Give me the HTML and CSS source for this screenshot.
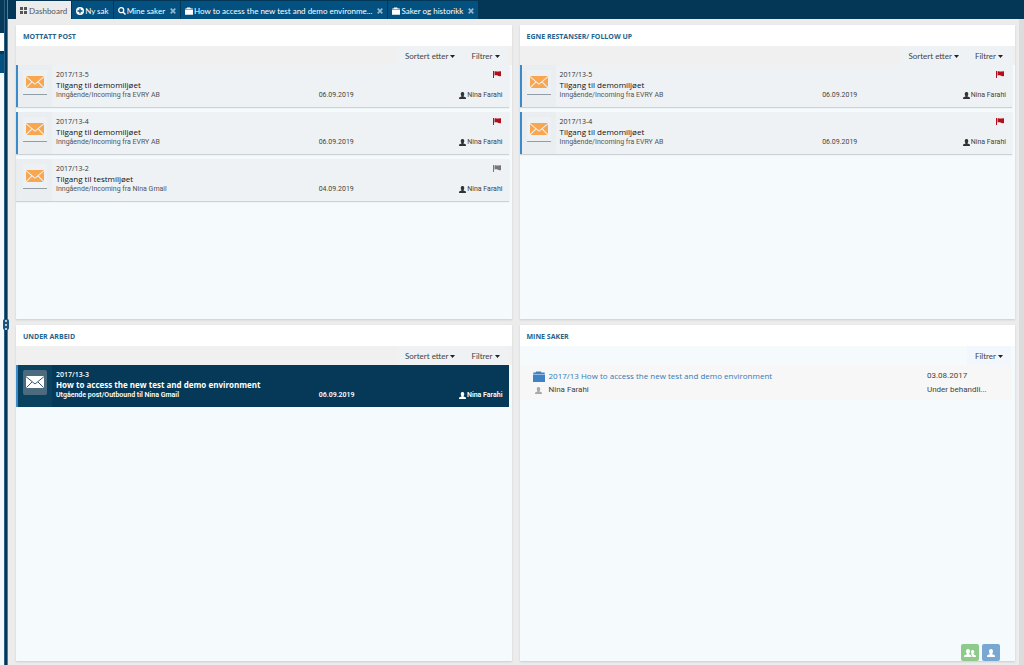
FILE: index.html
```html
<!DOCTYPE html>
<html lang="no">
<head>
<meta charset="utf-8">
<title>Dashboard</title>
<link rel="stylesheet" href="styles.css">
</head>
<body>
<svg class="defs" aria-hidden="true">
  <symbol id="i-mail" viewBox="0 0 18 12"><path d="M0 0H18L9 7.4ZM0 1.3L5.3 5.8L0 11ZM18 1.3L12.7 5.8L18 11ZM6.1 6.4L9 8.7L11.9 6.4L17.3 12H.7Z" fill="currentColor"/></symbol>
  <symbol id="i-mail-line" viewBox="0 0 18 12"><path d="M0 0H18V12H0Z" fill="#fff"/><path d="M0 .6L9 8L18 .6M.4 11.6L6 6M17.6 11.6L12 6" fill="none" stroke="#38596f"/></symbol>
  <symbol id="i-flag" viewBox="0 0 8 7"><path d="M0 0H1V7H0ZM1.500 .4C3-.2 4 .8 5.200 .5L8 .3V5C6.600 5.600 5.500 5 4.500 4.600C3.500 4.200 2.500 4.200 1.500 4.600Z" fill="currentColor"/></symbol>
  <symbol id="i-user" viewBox="0 0 8 8"><path d="M2 2.200C2-.7 6-.7 6 2.200C6 3.700 5.400 4.200 5.200 4.700V5.200L7.500 6Q8 6.300 8 8H0Q0 6.300 .5 6L2.800 5.200V4.700C2.600 4.200 2 3.700 2 2.200Z" fill="currentColor"/></symbol>
  <symbol id="i-users" viewBox="0 0 12 8"><path d="M2 2.200C2-.6 6-.6 6 2.200C6 3.700 5.200 4.200 5.100 4.700V5.200L7 6.200Q7.500 6.500 7.500 8H0Q0 6.500 .5 6.200L2.900 5.200V4.700C2.800 4.200 2 3.700 2 2.200ZM7 2.600C7 .6 10.300 .6 10.300 2.600C10.300 3.900 9.600 4.300 9.500 4.700V5.200L11.500 6.200Q12 6.500 12 8H8.300Q8.300 6 7.400 5.600L6.500 5.100L7.700 4.700C7.300 4.200 7 3.700 7 2.600Z" fill="currentColor"/></symbol>
  <symbol id="i-folder" viewBox="0 0 12 11"><path d="M0 3.600H12V11H0ZM.3 3V1.600H2.500L3.200 .4H7.800L8.500 1.600H11.700V3Z" fill="currentColor"/></symbol>
  <symbol id="i-grid" viewBox="0 0 7 7"><path d="M0 0H3V3H0ZM4 0H7V3H4ZM0 4H3V7H0ZM4 4H7V7H4Z" fill="currentColor"/></symbol>
  <symbol id="i-plus" viewBox="0 0 8 8"><circle cx="4" cy="4" r="4" fill="currentColor"/><path d="M4 1.500V6.500M1.500 4H6.500" stroke="#035180" stroke-width="1.300"/></symbol>
  <symbol id="i-search" viewBox="0 0 8 8"><circle cx="3.200" cy="3.200" r="2.500" fill="none" stroke="currentColor" stroke-width="1.300"/><path d="M5 5L7.500 7.500" stroke="currentColor" stroke-width="1.500"/></symbol>
  <symbol id="i-x" viewBox="0 0 6 6"><path d="M.7 .7L5.300 5.300M5.300 .7L.7 5.300" stroke="currentColor" stroke-width="1.700"/></symbol>
  <symbol id="i-caret" viewBox="0 0 5 3"><path d="M0 0H5L2.500 3Z" fill="currentColor"/></symbol>
</svg>
<div class="app">
  <aside class="rail">
    <div class="rail-top"></div>
    <div class="rail-field"></div>
    <div class="rail-active"></div>
  </aside>
  <div class="splitter"><button class="handle" aria-label="Resize"></button></div>
  <div class="main">
    <nav class="tabs">
      <div class="tab current"><button class="open"><svg class="ic7"><use href="#i-grid"/></svg>Dashboard</button></div>
      <div class="tab"><button class="open"><svg class="ic8"><use href="#i-plus"/></svg>Ny sak</button></div>
      <div class="tab"><button class="open"><svg class="ic8"><use href="#i-search"/></svg>Mine saker</button><button class="close" aria-label="Close"><svg class="ic6"><use href="#i-x"/></svg></button></div>
      <div class="tab"><button class="open"><svg class="ic8"><use href="#i-folder"/></svg>How to access the new test and demo environme...</button><button class="close" aria-label="Close"><svg class="ic6"><use href="#i-x"/></svg></button></div>
      <div class="tab"><button class="open"><svg class="ic8"><use href="#i-folder"/></svg>Saker og historikk</button><button class="close" aria-label="Close"><svg class="ic6"><use href="#i-x"/></svg></button></div>
    </nav>
    <main class="board">
      <section class="panel">
        <h2>MOTTATT POST</h2>
        <div class="tools"><button>Sortert etter<svg class="caret"><use href="#i-caret"/></svg></button><button>Filtrer<svg class="caret"><use href="#i-caret"/></svg></button></div>
        <article class="card unread">
          <div class="thumb"><span><svg class="mail"><use href="#i-mail"/></svg></span></div>
          <div class="info"><span class="num">2017/13-5</span><svg class="flag"><use href="#i-flag"/></svg><h3>Tilgang til demomiljøet</h3><span class="meta">Inngående/Incoming fra EVRY AB</span><time>06.09.2019</time><span class="who"><svg class="ic7"><use href="#i-user"/></svg>Nina Farahi</span></div>
        </article>
        <article class="card unread">
          <div class="thumb"><span><svg class="mail"><use href="#i-mail"/></svg></span></div>
          <div class="info"><span class="num">2017/13-4</span><svg class="flag"><use href="#i-flag"/></svg><h3>Tilgang til demomiljøet</h3><span class="meta">Inngående/Incoming fra EVRY AB</span><time>06.09.2019</time><span class="who"><svg class="ic7"><use href="#i-user"/></svg>Nina Farahi</span></div>
        </article>
        <article class="card">
          <div class="thumb"><span><svg class="mail"><use href="#i-mail"/></svg></span></div>
          <div class="info"><span class="num">2017/13-2</span><svg class="flag muted"><use href="#i-flag"/></svg><h3>Tilgang til testmiljøet</h3><span class="meta">Inngående/Incoming fra Nina Gmail</span><time>04.09.2019</time><span class="who"><svg class="ic7"><use href="#i-user"/></svg>Nina Farahi</span></div>
        </article>
      </section>
      <section class="panel">
        <h2>EGNE RESTANSER/ FOLLOW UP</h2>
        <div class="tools"><button>Sortert etter<svg class="caret"><use href="#i-caret"/></svg></button><button>Filtrer<svg class="caret"><use href="#i-caret"/></svg></button></div>
        <article class="card unread">
          <div class="thumb"><span><svg class="mail"><use href="#i-mail"/></svg></span></div>
          <div class="info"><span class="num">2017/13-5</span><svg class="flag"><use href="#i-flag"/></svg><h3>Tilgang til demomiljøet</h3><span class="meta">Inngående/Incoming fra EVRY AB</span><time>06.09.2019</time><span class="who"><svg class="ic7"><use href="#i-user"/></svg>Nina Farahi</span></div>
        </article>
        <article class="card unread">
          <div class="thumb"><span><svg class="mail"><use href="#i-mail"/></svg></span></div>
          <div class="info"><span class="num">2017/13-4</span><svg class="flag"><use href="#i-flag"/></svg><h3>Tilgang til demomiljøet</h3><span class="meta">Inngående/Incoming fra EVRY AB</span><time>06.09.2019</time><span class="who"><svg class="ic7"><use href="#i-user"/></svg>Nina Farahi</span></div>
        </article>
      </section>
      <section class="panel">
        <h2>UNDER ARBEID</h2>
        <div class="tools"><button>Sortert etter<svg class="caret"><use href="#i-caret"/></svg></button><button>Filtrer<svg class="caret"><use href="#i-caret"/></svg></button></div>
        <article class="card unread selected">
          <div class="thumb"><span><svg class="mail"><use href="#i-mail-line"/></svg></span></div>
          <div class="info"><span class="num">2017/13-3</span><h3>How to access the new test and demo environment</h3><span class="meta">Utgående post/Outbound til Nina Gmail</span><time>06.09.2019</time><span class="who"><svg class="ic7"><use href="#i-user"/></svg>Nina Farahi</span></div>
        </article>
      </section>
      <section class="panel cases">
        <h2>MINE SAKER</h2>
        <div class="tools"><button>Filtrer<svg class="caret"><use href="#i-caret"/></svg></button></div>
        <article class="case">
          <svg class="case-folder"><use href="#i-folder"/></svg><a href="#case">2017/13 How to access the new test and demo environment</a><time>03.08.2017</time>
          <svg class="case-user"><use href="#i-user"/></svg><span>Nina Farahi</span><span>Under behandli...</span>
        </article>
        <div class="presence"><button class="group" aria-label="Group"><svg class="users"><use href="#i-users"/></svg></button><button class="single" aria-label="User"><svg class="ic8"><use href="#i-user"/></svg></button></div>
      </section>
    </main>
  </div>
</div>
</body>
</html>
```
FILE: styles.css
```css
* { box-sizing: border-box; }
body { margin: 0; font: 7px/10px "Open Sans", "Noto Sans", sans-serif; color: #444; background: #ececec; }
button { border: 0; padding: 0; margin: 0; background: none; font: inherit; color: inherit; }
svg { display: block; flex: none; }
h2, h3 { margin: 0; }
.defs { position: absolute; width: 0; height: 0; }
.ic6 { width: 6px; height: 6px; }
.ic7 { width: 7px; height: 7px; }
.ic8 { width: 8px; height: 8px; }

.app { display: grid; grid-template-columns: 4px 4px 1fr; height: 100vh; }
.rail { background: #f3f8fb; display: flex; flex-direction: column; }
.rail-top { height: 33px; background: #063a58; }
.rail-field { height: 18px; background: #fff; border-radius: 0 2px 2px 0; }
.rail-active { height: 22px; background: #035180; border-top: 3px solid #063a58; }
.splitter { background: #043655; border-left: 1px solid #2c6084; border-right: 1px solid #4d7d9b; display: flex; align-items: center; justify-content: center; padding-bottom: 16px; }
.handle { flex: none; width: 6px; height: 11px; background: radial-gradient(circle, #b5cbdb 1px, #1b5379 1px) 0 0 / 6px 4px; border-radius: 2px; }

.main { display: flex; flex-direction: column; min-width: 0; }
.tabs { display: flex; gap: 1px; height: 19px; padding: 1px 0 0 8px; background: #043655; flex: none; }
.tab { display: flex; align-items: center; gap: 5px; padding: 1px 4px 0; background: #035180; color: #fff; font-family: Lato, "Open Sans", sans-serif; font-size: 8px; }
.tab .open { display: flex; align-items: center; gap: 1px; white-space: nowrap; }
.tab .close { color: #91b5cc; }
.tab.current { background: #ececec; color: #555; }
.tab.current .open { gap: 2px; }

.board { flex: 1; min-height: 0; display: grid; grid-template-columns: 1fr 1fr; grid-template-rows: 7fr 8fr; gap: 6px 8px; padding: 6px 4px 4px 8px; margin-right: 5px; box-shadow: 5px 0 #dcdcdc; }
.panel { background: #f5fafd; box-shadow: 0 1px 2px #ccc; display: flex; flex-direction: column; min-width: 0; }
.panel h2 { height: 21px; padding: 0 7px; background: #fff; color: #1f638d; font-size: 7px; line-height: 24px; font-weight: 700; }
.tools { height: 19px; display: flex; justify-content: flex-end; padding: 0 4px 0 0; background: #f0f0f0; font-family: Lato, "Open Sans", sans-serif; font-size: 8px; }
.tools button { display: flex; align-items: center; gap: 2px; padding: 1px 8px 0; background: #eef2f5; }
.caret { width: 5px; height: 3px; color: #222; }

.card { display: flex; height: 42px; margin: 0 3px 5px 0; background: #eef2f5; border-left: 2px solid #e8edf0; box-shadow: 0 1px 1px #ccd2d6; }
.unread { border-left-color: #3b8bca; }
.thumb { width: 34px; background: #ebeef1; display: flex; justify-content: center; padding-top: 5px; }
.thumb span { width: 24px; height: 25px; display: flex; align-items: center; justify-content: center; background: #eef1f4; border-bottom: 1px solid #929da5; }
.mail { width: 18px; height: 12px; color: #f9a650; }
.info { flex: 1; display: grid; grid-template-columns: 10fr 7fr; grid-auto-rows: 10px; padding: 5px 6px 0 4px; }
.num, .info h3 { grid-column: 1; }
.num { color: #333; }
.info h3 { grid-row: 2; font-size: 8px; line-height: 10px; font-weight: 500; color: #111; white-space: nowrap; }
.flag { grid-column: 2; grid-row: 1; justify-self: end; width: 8px; height: 7px; margin: 1px 2px 0 0; color: #b20e1c; }
.flag.muted { color: #777; }
.info .meta, .info time, .who { grid-row: 3; white-space: nowrap; font-family: Roboto, "Open Sans", sans-serif; }
.info .meta { color: #555; }
.info time { grid-column: 2; }
.who { grid-column: 2; justify-self: end; display: flex; align-items: center; gap: 1px; }
.who svg { color: #333; }
.selected { background: #053957; box-shadow: none; }
.selected .thumb { background: #09415f; }
.selected .thumb span { background: #4c6b7e; border-bottom-color: #4c6b7e; border-radius: 2px; }
.selected .info { font-weight: 600; }
.selected .info h3 { font-weight: 700; }
.selected .info *, .selected .who svg { color: #fff; }

.cases .tools { background: #f5fafd; }
.cases .tools button { background: #f1f7fc; }
.case { display: grid; grid-template-columns: 12px 1fr 80px; grid-auto-rows: 14px; column-gap: 4px; align-items: center; padding: 4px 5px 3px 13px; margin-right: 3px; background: #f7f7f7; font-size: 8px; }
.case span { font-family: Roboto, "Open Sans", sans-serif; }
.case time { font-family: Roboto, "Open Sans", sans-serif; }
.case a { color: #337ab7; text-decoration: none; }
.case-folder { width: 12px; height: 11px; color: #3f83c6; }
.case-user { width: 7px; height: 7px; color: #aaa; justify-self: center; }
.presence { margin-top: auto; display: flex; justify-content: flex-end; gap: 3px; padding-right: 15px; }
.presence button { width: 18px; height: 17px; border-radius: 2px; display: flex; align-items: center; justify-content: center; color: #fff; }
.users { width: 12px; height: 8px; }
.group { background: #8fc98b; }
.single { background: #78a7d2; }
```
